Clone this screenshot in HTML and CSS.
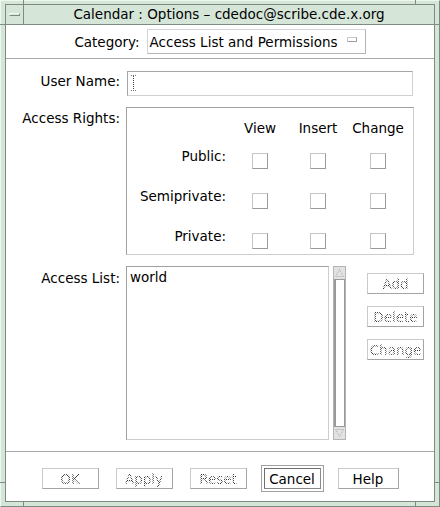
FILE: index.html
```html
<!DOCTYPE html>
<html>
<head>
<meta charset="utf-8">
<link rel="stylesheet" href="styles.css">
</head>
<body>
<div class="window">
  <span class="tick tv tk1"></span><span class="tick tv tk2"></span>
  <span class="tick tv tk3"></span><span class="tick tv tk4"></span>
  <span class="tick th tk5"></span><span class="tick th tk6"></span>
  <span class="tick th tk7"></span><span class="tick th tk8"></span>
  <div class="inner">
    <div class="titlebar">
      <div class="menubtn"><span class="bar"></span></div>
      <div class="title">Calendar : Options – cdedoc@scribe.cde.x.org</div>
    </div>
    <div class="client">
      <div class="catrow">
        <span class="catlabel">Category:</span>
        <div class="optmenu"><span>Access List and Permissions</span><span class="ind"></span></div>
      </div>
      <div class="sep"></div>
      <div class="form">
        <div class="label l-un">User Name:</div>
        <div class="field">
          <svg class="ibeam" width="5" height="16" viewBox="0 0 5 16"><path d="M0 0.5h5M0 15.5h5" stroke="#777" stroke-dasharray="1 1"/><path d="M2.5 1v14" stroke="#444" stroke-dasharray="1 1"/></svg>
        </div>
        <div class="label l-ar">Access Rights:</div>
        <div class="arbox">
          <div></div><div class="hd">View</div><div class="hd">Insert</div><div class="hd">Change</div>
          <div class="rl">Public:</div><span class="cb"></span><span class="cb"></span><span class="cb"></span>
          <div class="rl">Semiprivate:</div><span class="cb"></span><span class="cb"></span><span class="cb"></span>
          <div class="rl">Private:</div><span class="cb"></span><span class="cb"></span><span class="cb"></span>
        </div>
        <div class="label l-al">Access List:</div>
        <div class="alrow">
          <div class="list"><div class="item">world</div></div>
          <div class="sb">
            <div class="arr"><svg width="9" height="8" viewBox="0 0 9 8"><path d="M4.5 0.5L8.5 7.5H0.5Z" fill="none" stroke="#aaa" stroke-dasharray="1 1"/></svg></div>
            <div class="slider"></div>
            <div class="arr"><svg width="9" height="8" viewBox="0 0 9 8"><path d="M4.5 7.5L8.5 0.5H0.5Z" fill="none" stroke="#aaa" stroke-dasharray="1 1"/></svg></div>
          </div>
          <div class="sidebtns">
            <button class="btn"><span class="dis">Add</span></button>
            <button class="btn"><span class="dis">Delete</span></button>
            <button class="btn"><span class="dis">Change</span></button>
          </div>
        </div>
      </div>
      <div class="sep"></div>
      <div class="btnrow">
        <button class="btn"><span class="dis">OK</span></button>
        <button class="btn"><span class="dis">Apply</span></button>
        <button class="btn"><span class="dis">Reset</span></button>
        <button class="btn def">Cancel</button>
        <button class="btn help">Help</button>
      </div>
    </div>
  </div>
</div>
</body>
</html>
```
FILE: styles.css
```css
body {
  margin: 0;
  font: 13.5px/16px "DejaVu Sans", sans-serif;
  color: #000;
  background: #d5e6d9;
}
.window {
  position: relative;
  width: 440px;
  height: 507px;
  box-sizing: border-box;
  background: #d5e6d9;
  border: 1px solid;
  border-color: #eef6f0 #7d8b80 #7d8b80 #eef6f0;
  padding: 3px 4px 4px 4px;
  display: flex;
}
.tick { position: absolute; background: #7d8b80; }
.tv { width: 1px; height: 5px; }
.th { width: 5px; height: 1px; }
.tk1 { left: 22px; top: -1px; }
.tk2 { left: 414px; top: -1px; }
.tk3 { left: 22px; top: 500px; height: 6px; }
.tk4 { left: 414px; top: 500px; height: 6px; }
.tk5 { left: -1px; top: 23px; }
.tk6 { left: -1px; top: 481px; }
.tk7 { left: 434px; top: 23px; }
.tk8 { left: 434px; top: 481px; }
.inner {
  flex: 1;
  border: 1px solid #7d8b80;
  display: flex;
  flex-direction: column;
}
.titlebar {
  height: 19px;
  display: flex;
  border-bottom: 1px solid #7d8b80;
}
.menubtn {
  width: 17px;
  border-right: 1px solid #7d8b80;
  display: flex;
  align-items: center;
  justify-content: center;
}
.bar {
  width: 11px;
  height: 3px;
  box-sizing: border-box;
  border: 1px solid;
  border-color: #f6fbf8 #7d8b80 #7d8b80 #f6fbf8;
  margin-top: -1px;
}
.title {
  flex: 1;
  text-align: center;
  line-height: 19px;
  white-space: nowrap;
}
.client {
  flex: 1;
  background: #fff;
  display: flex;
  flex-direction: column;
}
.catrow {
  display: flex;
  justify-content: center;
  align-items: center;
  gap: 7px;
  padding: 4px 0;
}
.optmenu {
  width: 219px;
  height: 25px;
  box-sizing: border-box;
  border: 1px solid;
  border-color: #d4d4d4 #b4b4b4 #b4b4b4 #d4d4d4;
  display: flex;
  align-items: center;
  padding-left: 2px;
  white-space: nowrap;
}
.ind {
  width: 10px;
  height: 5px;
  box-sizing: border-box;
  border: 1px solid;
  border-color: #c8c8c8 #a0a0a0 #a0a0a0 #c8c8c8;
  margin-left: auto;
  margin-right: 8px;
  align-self: flex-start;
  margin-top: 7px;
}
.sep { height: 1px; background: #a8a8a8; }
.form {
  display: grid;
  grid-template-columns: 114px auto;
  column-gap: 6px;
  row-gap: 11px;
  padding: 12px 0 11px;
  align-items: start;
}
.label { text-align: right; white-space: nowrap; }
.l-un { margin-top: 2px; }
.l-ar { margin-top: 3px; }
.l-al { margin-top: 4px; }
.field {
  margin-left: 1px;
  width: 286px;
  height: 25px;
  box-sizing: border-box;
  border: 1px solid;
  border-color: #a6a6a6 #d0d0d0 #d0d0d0 #a6a6a6;
  padding: 3px 0 0 3px;
}
.ibeam { display: block; }
.arbox {
  width: 288px;
  height: 148px;
  box-sizing: border-box;
  border: 1px solid;
  border-color: #a0a0a0 #cdcdcd #cdcdcd #a0a0a0;
  display: grid;
  grid-template-columns: 102px 62px 54px 66px;
  grid-template-rows: 28px 40px 40px auto;
  align-content: start;
  padding-top: 12px;
}
.hd { text-align: center; }
.rl { text-align: right; padding-right: 3px; white-space: nowrap; }
.cb {
  width: 16px;
  height: 16px;
  box-sizing: border-box;
  border: 1px solid;
  border-color: #c4c4c4 #9a9a9a #9a9a9a #c4c4c4;
  justify-self: center;
  margin-top: 5px;
}
.alrow { display: flex; align-items: flex-start; }
.list {
  width: 203px;
  height: 174px;
  box-sizing: border-box;
  border: 1px solid;
  border-color: #a0a0a0 #cdcdcd #cdcdcd #a0a0a0;
  padding: 2px 3px;
}
.sb {
  margin-left: 4px;
  width: 13px;
  height: 174px;
  box-sizing: border-box;
  border: 1px solid #b4b4b4;
  display: flex;
  flex-direction: column;
}
.arr {
  height: 12px;
  background: #e2e2e2;
  display: flex;
  align-items: center;
  justify-content: center;
}
.arr svg { display: block; }
.slider {
  flex: 1;
  border: solid #9a9a9a;
  border-width: 1px 1px 1px 2px;
  background: #fff;
}
.sidebtns {
  margin-left: 21px;
  margin-top: 7px;
  display: flex;
  flex-direction: column;
  gap: 12px;
}
.btn {
  width: 57px;
  height: 21px;
  box-sizing: border-box;
  border: 1px solid;
  border-color: #cacaca #a4a4a4 #a4a4a4 #cacaca;
  background: #fff;
  font: inherit;
  color: #000;
  padding: 0;
  margin: 0;
  display: flex;
  align-items: center;
  justify-content: center;
}
.dis {
  color: transparent;
  background: repeating-conic-gradient(#3a3a3a 0 25%, #ffffff 0 50%) 0 0 / 2px 2px;
  -webkit-background-clip: text;
  background-clip: text;
}
.btnrow {
  flex: 1;
  display: flex;
  justify-content: center;
  align-items: flex-start;
  gap: 17px;
  padding-top: 16px;
}
.def {
  border-color: #6e6e6e #8a8a8a #8a8a8a #6e6e6e;
  outline: 1px solid #a0a0a0;
  outline-offset: 2px;
}
.help { width: 61px; }
```
